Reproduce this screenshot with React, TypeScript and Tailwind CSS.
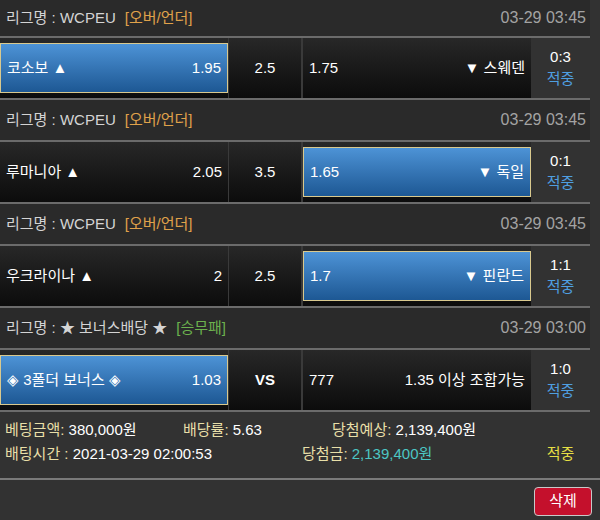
import React from "react";

type Sel = "home" | "away" | null;

interface Game {
  league: React.ReactNode;
  type: string;
  typeClass: string;
  date: string;
  home: string;
  homeOdds: string;
  mid: string;
  away: string;
  awayOdds: string;
  sel: Sel;
  score: string;
  bold?: boolean;
}

const games: Game[] = [
  { league: "리그명 : WCPEU", type: "[오버/언더]", typeClass: "text-[#e0a24a]", date: "03-29 03:45", home: "코소보 ▲", homeOdds: "1.95", mid: "2.5", away: "▼ 스웨덴", awayOdds: "1.75", sel: "home", score: "0:3" },
  { league: "리그명 : WCPEU", type: "[오버/언더]", typeClass: "text-[#e0a24a]", date: "03-29 03:45", home: "루마니아 ▲", homeOdds: "2.05", mid: "3.5", away: "▼ 독일", awayOdds: "1.65", sel: "away", score: "0:1" },
  { league: "리그명 : WCPEU", type: "[오버/언더]", typeClass: "text-[#e0a24a]", date: "03-29 03:45", home: "우크라이나 ▲", homeOdds: "2", mid: "2.5", away: "▼ 핀란드", awayOdds: "1.7", sel: "away", score: "1:1" },
  { league: "리그명 : ★ 보너스배당 ★", type: "[승무패]", typeClass: "text-[#6cb24e]", date: "03-29 03:00", home: "◈ 3폴더 보너스 ◈", homeOdds: "1.03", mid: "VS", away: "1.35 이상 조합가능", awayOdds: "777", sel: "home", score: "1:0", bold: true },
];

function Cell({ selected, children }: { selected: boolean; children: React.ReactNode }) {
  return (
    <div className="flex h-full w-[228px] shrink-0 items-stretch bg-linear-to-b from-[#282828] to-[#0c0c0c]">
      {selected ? (
        <div className="my-[5px] flex flex-1 items-center justify-between border border-[#d9c98e] bg-linear-to-b from-[#4d93d6] to-[#1d5894] px-[6px]">
          {children}
        </div>
      ) : (
        <div className="flex flex-1 items-center justify-between px-[6px]">{children}</div>
      )}
    </div>
  );
}

function GameBlock({ g, first }: { g: Game; first: boolean }) {
  return (
    <>
      <div className={`flex items-center justify-between bg-[#2a2a2a] pl-[6px] pr-[4px] ${first ? "h-[36px]" : "h-[40px]"}`}>
        <div className="flex items-center gap-[9px] text-[#d4d4d4]">
          <span>{g.league}</span>
          <span className={g.typeClass}>{g.type}</span>
        </div>
        <span className="text-[16px] text-[#a3a3a3]">{g.date}</span>
      </div>
      <div className="h-[2px] bg-[#6b6b6b]" />
      <div className="flex h-[60px] items-stretch">
        <Cell selected={g.sel === "home"}>
          <span>{g.home}</span>
          <span>{g.homeOdds}</span>
        </Cell>
        <div className="w-px bg-[#3a3a3a]" />
        <div className={`flex w-[72px] items-center justify-center bg-linear-to-b from-[#282828] to-[#0c0c0c] ${g.bold ? "font-bold" : ""}`}>
          {g.mid}
        </div>
        <div className="w-[2px] bg-[#3a3a3a]" />
        <Cell selected={g.sel === "away"}>
          <span>{g.awayOdds}</span>
          <span>{g.away}</span>
        </Cell>
        <div className="flex w-[59px] flex-col items-center justify-center gap-[2px] leading-[20px]">
          <span>{g.score}</span>
          <span className="text-[#4f9fe0]">적중</span>
        </div>
      </div>
      <div className="h-[2px] bg-[#6b6b6b]" />
    </>
  );
}

export default function App() {
  return (
    <div className="h-[520px] w-[600px] overflow-hidden bg-[#323232] font-['Liberation_Sans','Noto_Sans_CJK_KR',sans-serif] text-[15px] text-white">
      <div className="w-[590px]">
        {games.map((g, i) => (
          <GameBlock key={i} g={g} first={i === 0} />
        ))}
      </div>
      <div className="flex h-[66px] flex-col gap-[4px] pl-[5px] pt-[8px] leading-[20px]">
        <div className="flex">
          <span className="w-[178px]">
            <span className="text-[#e8dfa8]">베팅금액: </span>380,000원
          </span>
          <span className="w-[149px]">
            <span className="text-[#e8dfa8]">배당률: </span>5.63
          </span>
          <span>
            <span className="text-[#e8dfa8]">당첨예상: </span>2,139,400원
          </span>
        </div>
        <div className="flex">
          <span className="w-[297px]">
            <span className="text-[#e8dfa8]">배팅시간 : </span>2021-03-29 02:00:53
          </span>
          <span className="w-[229px]">
            <span className="text-[#e8dfa8]">당첨금: </span>
            <span className="text-[#4cc6c4]">2,139,400원</span>
          </span>
          <span className="w-[59px] text-center text-[#e6df44]">적중</span>
        </div>
      </div>
      <div className="h-[2px] bg-[#7a7a7a]" />
      <div className="flex justify-end pr-[8px] pt-[7px]">
        <button className="flex h-[29px] w-[58px] items-center justify-center rounded-[4px] border border-[#c8c8c8] bg-[#c4102c] text-white">
          삭제
        </button>
      </div>
    </div>
  );
}
